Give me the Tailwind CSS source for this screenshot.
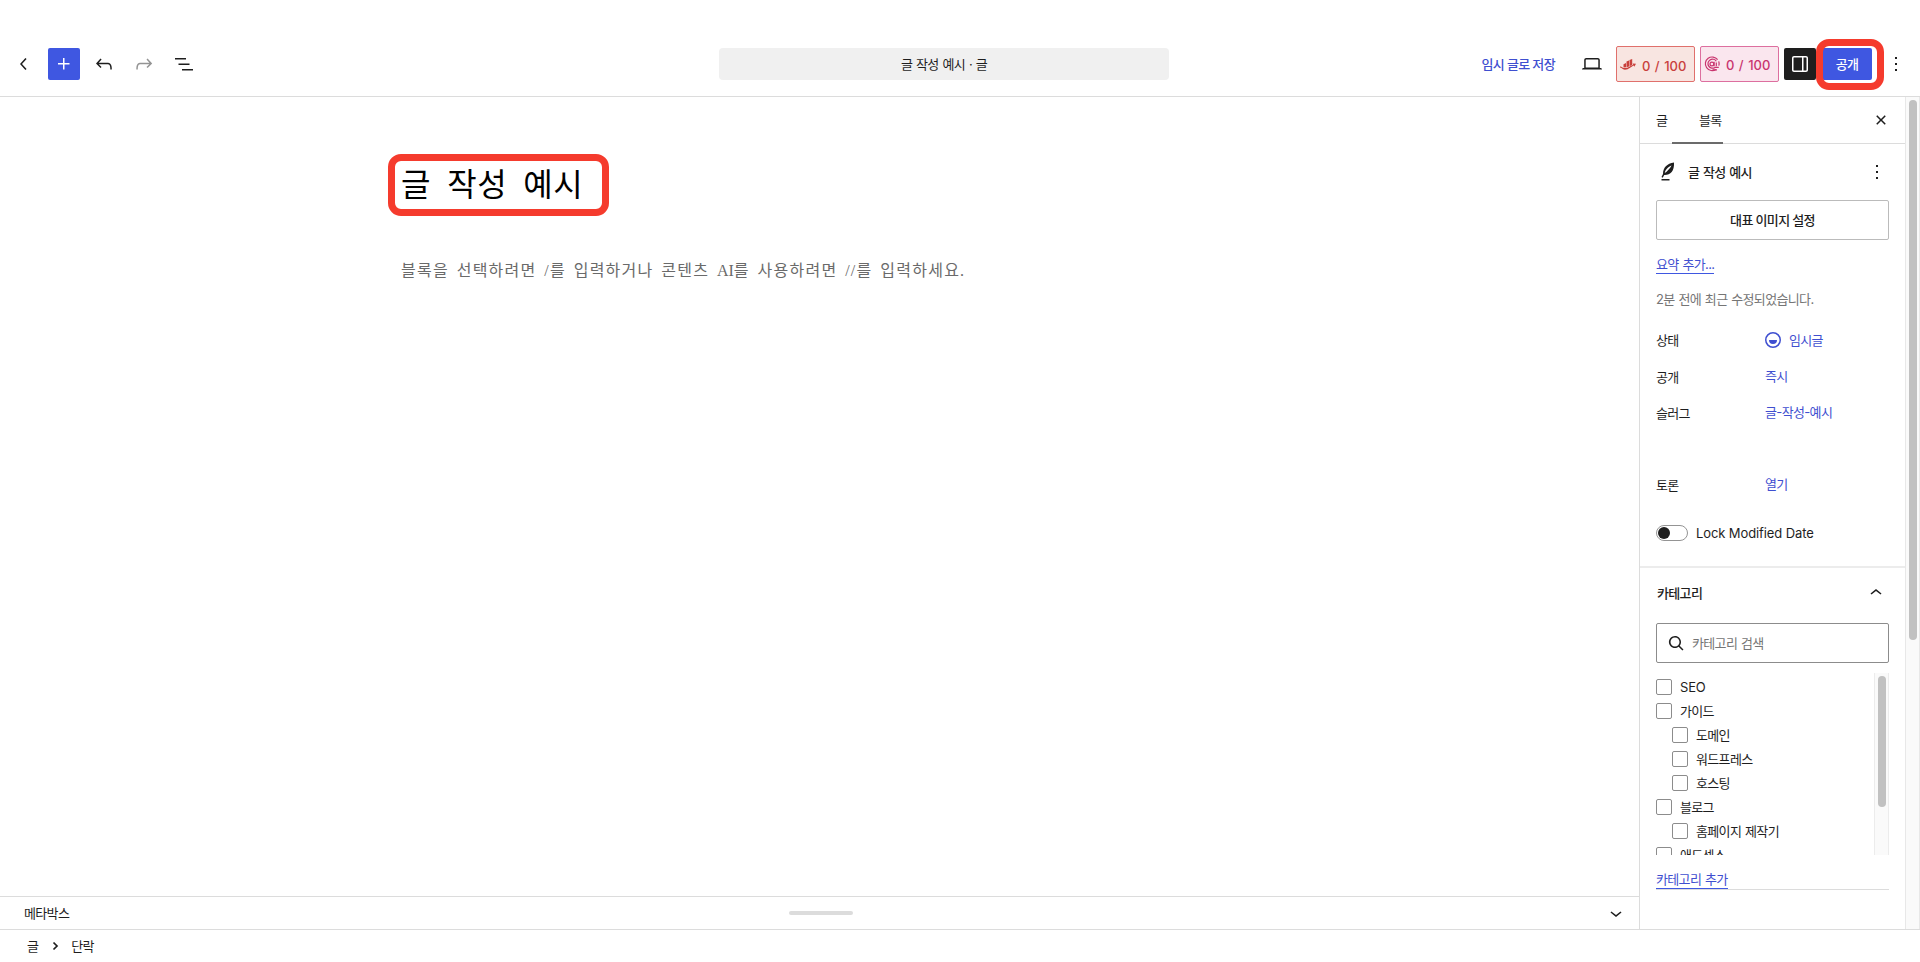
<!DOCTYPE html>
<html lang="ko">
<head>
  <meta charset="UTF-8">
  <meta name="viewport" content="width=device-width, initial-scale=1.0">
  <title>글 작성 예시 · 글</title>
  <script src="https://cdn.jsdelivr.net/npm/@tailwindcss/browser@4"></script>
  <style>
    body {
      font-family: Inter, 'Noto Sans CJK KR', sans-serif;
    }
    .serif {
      font-family: 'Liberation Serif', 'Noto Sans CJK KR', serif;
    }
  </style>
</head>
<body class="bg-white text-[#1e1e1e] text-[13px] leading-5 tracking-[-0.65px] [word-spacing:0.8px]">
  <div class="h-[962px] w-[1920px] flex flex-col overflow-hidden">

    <!-- Header -->
    <header class="h-[97px] shrink-0 pt-8 border-b border-[#dcdcdc] grid grid-cols-[719px_450px_1fr] items-center">
      <div class="flex items-center">
        <button class="w-12 flex justify-center"><svg class="size-6" viewBox="0 0 24 24" fill="currentColor"><path d="M14.6 7l-1.2-1L8 12l5.4 6 1.2-1-4.6-5z"/></svg></button>
        <div class="flex gap-2">
          <button class="size-8 flex items-center justify-center rounded-[2px] bg-[#3f57e1] text-white"><svg class="size-6" viewBox="0 0 24 24" fill="currentColor"><path d="M11 12.5V17.5H12.5V12.5H17.5V11H12.5V6H11V11H6V12.5H11Z"/></svg></button>
          <button class="size-8 flex items-center justify-center"><svg class="size-6" viewBox="0 0 24 24" fill="currentColor"><path d="M18.3 11.7c-.6-.6-1.4-.9-2.3-.9H6.7l2.9-3.3-1.1-1-4.5 5L8.5 16l1-1-2.7-2.7H16c.5 0 .9.2 1.3.5 1 1 1 3.4 1 4.5v.3h1.5v-.2c0-1.5 0-4.3-1.5-5.7z"/></svg></button>
          <button class="size-8 flex items-center justify-center text-[#949494]"><svg class="size-6" viewBox="0 0 24 24" fill="currentColor"><path d="M15.6 6.5l-1.1 1 2.9 3.3H8c-.9 0-1.7.3-2.3.9-1.4 1.5-1.4 4.2-1.4 5.6v.2h1.5v-.3c0-1.1 0-3.5 1-4.5.3-.3.7-.5 1.3-.5h9.2L14.5 15l1.1 1.1 4.6-4.6-4.6-5z"/></svg></button>
          <button class="size-8 flex items-center justify-center"><svg class="size-6" viewBox="0 0 24 24" fill="currentColor"><path d="M3 6h11v1.5H3V6Zm3.5 5.5h11V13h-11v-1.5ZM21 17H10v1.5h11V17Z"/></svg></button>
        </div>
      </div>
      <div class="h-8 rounded-[4px] bg-[#f0f0f0] flex items-center justify-center">글 작성 예시 · 글</div>
      <div class="flex items-center justify-end pr-3">
        <button class="mr-[25px] font-medium text-[#3f4fd0]">임시 글로 저장</button>
        <svg class="size-6 mr-3" viewBox="0 0 24 24" fill="currentColor"><path d="M20.5 16h-.7V8c0-1.1-.9-2-2-2H6.2c-1.1 0-2 .9-2 2v8h-.7c-.8 0-1.5.7-1.5 1.5h20c0-.8-.7-1.5-1.5-1.5zM5.7 8c0-.3.2-.5.5-.5h11.6c.3 0 .5.2.5.5v7.6H5.7V8z"/></svg>
        <div class="w-[79px] h-9 mr-[5px] pl-[3px] pt-[3px] flex items-center gap-[6px] rounded-[2px] border border-[#e0706c] bg-[#f8e5e1] text-[#c9403c] font-medium tracking-[0.1px]">
          <svg class="w-4 h-4 -mt-0.5" viewBox="0 0 16 16" fill="currentColor"><path d="M3.500 7.200 6 6v4.200L3.500 10.600zM6.500 4.600 9 3.600v5.900L6.500 10.300zM9.500 3 12.200 2v6L9.500 9.200z"/><path d="M0 9.400c2 0 2.400 1.900 5 1.700C8.600 10.800 10 8.800 13.200 7.700l-.6-1.200 3.400.3-1.700 2.900-.6-1.100C11 9.800 9 12.600 5 12.800 2.200 12.900 1.800 10.600 0 10.600z"/></svg>
          <span>0 / 100</span>
        </div>
        <div class="w-[79px] h-9 mr-[5px] pl-[3px] pt-0.5 flex items-center gap-[6px] rounded-[2px] border border-[#dd6f9f] bg-[#fae6ee] text-[#c9356f] font-medium tracking-[0.1px]">
          <svg class="w-4 h-4 -mt-0.5" viewBox="0 0 16 16" fill="none" stroke="currentColor" stroke-width="1.200"><path d="M13.600 3.700A6.800 6.800 0 1 0 12 13.400"/><path d="M12.300 5.300A4.500 4.500 0 1 0 11 11.400h3.800M8.500 13.800H13"/><circle cx="7.900" cy="8" r="1.900"/><path d="M10.100 5.800v4.400M12.300 6.400v3.800M14.700 5.400c.5 1.500.5 3 .1 4.200"/></svg>
          <span>0 / 100</span>
        </div>
        <button class="size-8 mr-[6px] flex items-center justify-center rounded-[2px] bg-[#1e1e1e] text-white"><svg class="size-6" viewBox="0 0 24 24" fill="currentColor"><path d="M18 4H6c-1.100 0-2 .9-2 2v12c0 1.100.9 2 2 2h12c1.100 0 2-.9 2-2V6c0-1.100-.9-2-2-2zm-4 14.500H6c-.3 0-.5-.2-.5-.5V6c0-.3.2-.5.5-.5h8v13zm4.500-.5c0 .3-.2.5-.5.5h-2.500v-13H18c.3 0 .5.2.5.5v12z"/></svg></button>
        <div class="relative mr-3">
          <button class="w-[50px] h-8 block rounded-[2px] bg-[#3f57e1] text-white font-medium">공개</button>
          <div class="absolute -left-[6px] -top-[9px] w-[68px] h-[51px] rounded-[13px] border-[7px] border-[#f53b2d]"></div>
        </div>
        <svg class="size-6" viewBox="0 0 24 24" fill="currentColor"><path d="M13 19h-2v-2h2v2zm0-6h-2v-2h2v2zm0-6h-2V5h2v2z"/></svg>
      </div>
    </header>

    <div class="h-[832px] shrink-0 flex">
      <!-- Canvas -->
      <main class="w-[1639px] flex flex-col">
        <div class="flex-1 pl-[388px] pt-[57px]">
          <h1 class="serif w-[221px] h-[62px] pl-[6px] flex items-center rounded-[13px] border-[7px] border-[#f53b2d] text-black text-[32px] tracking-[0.6px] [word-spacing:7.500px] whitespace-nowrap">글 작성 예시</h1>
          <p class="serif mt-[43px] pl-[13px] text-[16px] leading-6 tracking-[1.250px] [word-spacing:2.500px] text-[#6a6a6a] whitespace-nowrap">블록을 선택하려면 /를 입력하거나 콘텐츠 <span class="tracking-normal">AI</span>를 사용하려면 //를 입력하세요.</p>
        </div>
        <div class="h-[33px] border-t border-[#dcdcdc] grid grid-cols-3 items-center pl-6 pr-[11px]">
          <span class="pb-px">메타박스</span>
          <span class="w-16 h-1 ml-[230px] rounded-full bg-[#dcdcdc]"></span>
          <svg class="size-6 justify-self-end" viewBox="0 0 24 24" fill="currentColor"><path d="M17.500 11.600L12 16l-5.500-4.400.9-1.200L12 14l4.500-3.600 1 1.200z"/></svg>
        </div>
      </main>

      <!-- Settings -->
      <aside class="w-[266px] border-l border-[#dcdcdc] flex flex-col">
        <div class="h-[47px] shrink-0 border-b border-[#dcdcdc] flex items-stretch">
          <button class="w-8 pl-4 pb-px text-left">글</button>
          <button class="w-[51px] pl-[27px] -mb-px text-left border-b-2 border-[#6b6b6b] whitespace-nowrap">블록</button>
          <svg class="size-6 ml-auto mr-3 self-center" viewBox="0 0 24 24" fill="currentColor"><path d="M12 13.060l3.712 3.713 1.061-1.060L13.061 12l3.712-3.712-1.060-1.060L12 10.938 8.288 7.227l-1.061 1.060L10.939 12l-3.712 3.712 1.060 1.061L12 13.061z"/></svg>
        </div>

        <div class="px-4 h-[422px] shrink-0">
          <div class="h-14 flex items-center">
            <svg class="size-6 shrink-0" viewBox="0 0 24 24" fill="currentColor"><path fill-rule="evenodd" d="M18 2.500C11 3.600 7 7.600 7 14L5.500 17.100l1.200.6 1.500-2.700c6 .3 10.300-3.800 9.800-12.500zM8.800 13.100c2.200-1.600 5.200-4.700 6.800-7.600-3.300 1.300-6.300 4-6.800 7.600z"/><path d="M5.500 19h8v1.500h-8z"/></svg>
            <span class="ml-2 pb-px font-medium">글 작성 예시</span>
            <svg class="size-6 ml-auto" viewBox="0 0 24 24" fill="currentColor"><path d="M13 19h-2v-2h2v2zm0-6h-2v-2h2v2zm0-6h-2V5h2v2z"/></svg>
          </div>
          <button class="w-[233px] h-10 pb-px block rounded-[2px] border border-[#bbb] font-medium">대표 이미지 설정</button>
          <div class="mt-4 leading-[17px]"><a class="inline-block border-b border-[#3f57e1] text-[#3f4fd0]">요약 추가...</a></div>
          <p class="mt-[15px] text-[#757575]">2분 전에 최근 수정되었습니다.</p>
          <div class="mt-[14px] grid grid-cols-[109px_1fr] auto-rows-[36px] items-center">
            <span class="pb-0.5">상태</span>
            <span class="-ml-1 pb-0.5 flex items-center gap-1 text-[#3f4fd0]"><svg class="size-6" viewBox="0 0 24 24" fill="currentColor" fill-rule="evenodd"><path d="M12 18.500a6.500 6.500 0 1 1 0-13 6.500 6.500 0 0 1 0 13ZM4 12a8 8 0 1 1 16 0 8 8 0 0 1-16 0Zm8 4a4 4 0 0 0 4-4H8a4 4 0 0 0 4 4Z"/></svg>임시글</span>
            <span>공개</span>
            <span class="pb-0.5 text-[#3f4fd0]">즉시</span>
            <span>슬러그</span>
            <span class="pb-0.5 text-[#3f4fd0]">글-작성-예시</span>
            <span class="col-span-2"></span>
            <span>토론</span>
            <span class="pb-0.5 text-[#3f4fd0]">열기</span>
          </div>
          <div class="mt-5 flex items-center gap-2">
            <span class="w-8 h-4 flex items-center rounded-full border border-[#949494] pl-px"><span class="size-3 rounded-full bg-[#1e1e1e]"></span></span>
            <span class="tracking-[-0.1px] [word-spacing:0px]">Lock Modified Date</span>
          </div>
        </div>

        <div class="flex-1 border-t-2 border-[#ececec] px-4">
          <div class="h-[55px] pl-px pr-[1px] pb-[6px] flex items-center justify-between">
            <span class="font-medium">카테고리</span>
            <svg class="size-6" viewBox="0 0 24 24" fill="currentColor"><path d="M6.500 12.400L12 8l5.500 4.400-.9 1.200L12 10l-4.500 3.600-1-1.200z"/></svg>
          </div>
          <div class="w-[233px] h-10 pl-[7px] flex items-center gap-1 rounded-[2px] border border-[#8c8c8c] text-[#757575]">
            <svg class="size-6 -scale-x-100 text-[#1e1e1e]" viewBox="0 0 24 24" fill="currentColor"><path d="M13 5c-3.300 0-6 2.700-6 6 0 1.400.5 2.700 1.300 3.700l-3.800 3.800 1.100 1.100 3.800-3.800c1 .8 2.300 1.300 3.700 1.300 3.300 0 6-2.700 6-6S16.300 5 13 5zm0 10.500c-2.500 0-4.500-2-4.500-4.500s2-4.500 4.500-4.500 4.500 2 4.500 4.500-2 4.500-4.500 4.500z"/></svg>
            카테고리 검색
          </div>
          <div class="w-[233px] h-[182px] mt-[10px] flex justify-between overflow-hidden">
            <ul class="pt-[2px] whitespace-nowrap">
              <li class="h-6 flex items-center gap-2"><span class="size-4 rounded-[2px] border border-[#8c8c8c]"></span><span class="tracking-[-0.2px]">SEO</span></li>
              <li class="h-6 flex items-center gap-2"><span class="size-4 rounded-[2px] border border-[#8c8c8c]"></span>가이드</li>
              <li class="h-6 pl-4 flex items-center gap-2"><span class="size-4 rounded-[2px] border border-[#8c8c8c]"></span>도메인</li>
              <li class="h-6 pl-4 flex items-center gap-2"><span class="size-4 rounded-[2px] border border-[#8c8c8c]"></span>워드프레스</li>
              <li class="h-6 pl-4 flex items-center gap-2"><span class="size-4 rounded-[2px] border border-[#8c8c8c]"></span>호스팅</li>
              <li class="h-6 flex items-center gap-2"><span class="size-4 rounded-[2px] border border-[#8c8c8c]"></span>블로그</li>
              <li class="h-6 pl-4 flex items-center gap-2"><span class="size-4 rounded-[2px] border border-[#8c8c8c]"></span>홈페이지 제작기</li>
              <li class="h-6 flex items-center gap-2"><span class="size-4 rounded-[2px] border border-[#8c8c8c]"></span>애드센스</li>
            </ul>
            <div class="w-[15px] pt-[3px] pl-[3px] border-x border-[#ececec] bg-[#fafafa]">
              <div class="w-2 h-[131px] rounded-full bg-[#c1c1c1]"></div>
            </div>
          </div>
          <div class="w-[233px] h-[35px] pt-4 leading-[17px] border-b border-[#dcdcdc]"><a class="inline-block border-b border-[#3f57e1] text-[#3f4fd0]">카테고리 추가</a></div>
        </div>
      </aside>

      <div class="w-[15px] pt-[3px] pl-[3px] border-x border-[#e8e8e8] bg-[#fafafa]">
        <div class="w-2 h-[540px] rounded-full bg-[#c1c1c1]"></div>
      </div>
    </div>

    <!-- Breadcrumb -->
    <footer class="flex-1 pb-px border-t border-[#dcdcdc] flex items-center pl-[27px]">
      <span>글</span>
      <svg class="size-6 ml-[5px] mr-[4px]" viewBox="0 0 24 24" fill="none" stroke="currentColor" stroke-width="1.700"><path d="M10.500 8.500 14 12l-3.500 3.500"/></svg>
      <span>단락</span>
    </footer>
  </div>
</body>
</html>
